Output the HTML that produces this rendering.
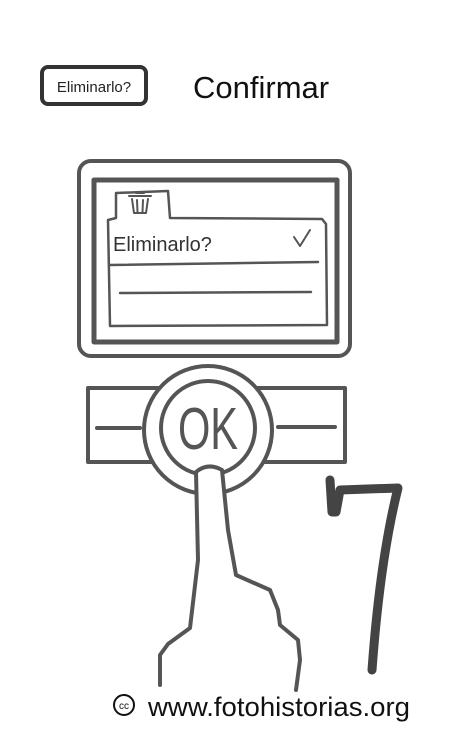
<!DOCTYPE html>
<html><head><meta charset="utf-8"><style>
body{margin:0;width:450px;height:750px;background:#fff;overflow:hidden;position:relative;font-family:"Liberation Sans",sans-serif;color:#111}
</style></head><body>
<svg width="450" height="750" style="position:absolute;left:0;top:0" fill="none" stroke="#555" stroke-linecap="round" stroke-linejoin="round">
<rect x="42" y="67" width="104" height="37" rx="6" stroke="#333" stroke-width="4"/>
<text x="94" y="92" font-size="15" fill="#222" stroke="none" text-anchor="middle" font-family="Liberation Sans">Eliminarlo?</text>
<text x="193" y="98" font-size="31" fill="#111" stroke="none" font-family="Liberation Sans">Confirmar</text>
<rect x="79" y="161" width="271" height="195" rx="12" stroke-width="4"/>
<rect x="94" y="180" width="243" height="162" stroke-width="5"/>
<path d="M108 220 L116 218 L116 193 L168 191 L170 218 L322 219 L326 224 L327 325 L110 326 Z" stroke-width="2.5"/>
<path d="M129 196 h22 M136 193 h8 M132 199 l2 14 h12 l2 -14 M137 200 l0.5 12 M143 200 l-0.5 12" stroke-width="2"/>
<text x="113" y="251" font-size="20" fill="#333" stroke="none" font-family="Liberation Sans">Eliminarlo?</text>
<path d="M294 237 l6 9 l10 -16" stroke-width="2"/>
<path d="M110 265 L318 262 M120 293 L311 292" stroke-width="2.5"/>
<path d="M88 388 H345 V462 H88 Z" stroke-width="4"/>
<path d="M97 428 H140 M278 427 H335" stroke-width="4"/>
<circle cx="208" cy="430" r="64" fill="#fff" stroke-width="4"/>
<circle cx="208" cy="428" r="47" stroke-width="4"/>
<text x="0" y="0" font-size="52" fill="#555" stroke="none" text-anchor="middle" font-family="Liberation Sans" transform="translate(208 449) scale(0.8 1.15)">OK</text>
<path d="M160 685 L160 655 L168 644 L190 628 L198 560 L196 472 Q208 462 222 470 L228 530 L236 575 L270 590 L278 610 L280 625 L298 640 L300 660 L296 690" fill="#fff" stroke-width="4"/>
<path d="M330 480 L332 512 L336 512 L340 490 L398 488 Q380 560 372 670" stroke-width="9" stroke="#444"/>
<circle cx="124" cy="705" r="10" stroke="#111" stroke-width="2"/>
<text x="124" y="709" font-size="10" fill="#111" stroke="none" text-anchor="middle">cc</text>
<text x="148" y="716" font-size="27" fill="#111" stroke="none" font-family="Liberation Sans" textLength="262" lengthAdjust="spacingAndGlyphs">www.fotohistorias.org</text>
</svg>
</body></html>
